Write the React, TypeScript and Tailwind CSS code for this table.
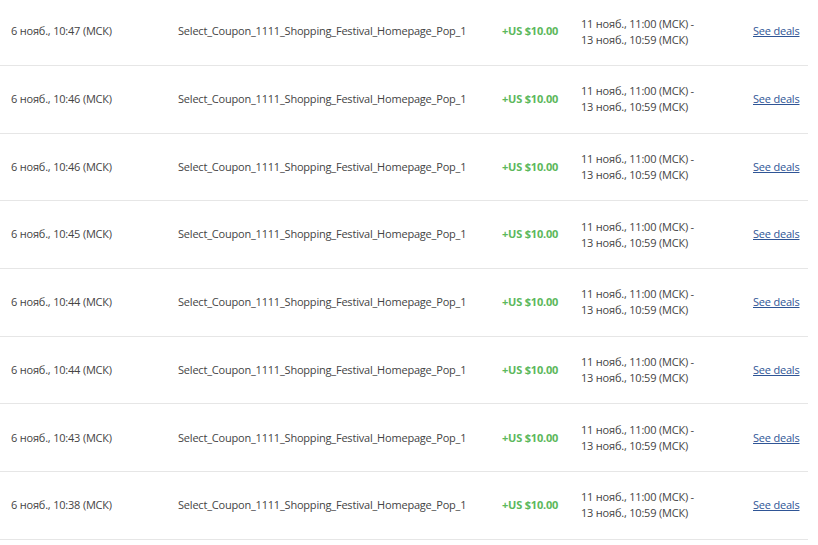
const rows = ['10:47', '10:46', '10:46', '10:45', '10:44', '10:44', '10:43', '10:38']

export default function App() {
  return (
    <div className="w-[818px] h-[545px] overflow-hidden bg-white font-['Open_Sans',sans-serif] text-[11px] tracking-[-0.2px] text-[#444]">
      <div className="-mt-[1.7px] w-[808px]">
        {rows.map((time, i) => (
          <div key={i} className="flex items-center h-[67.7px] border-b border-[#e6e6e6]">
            <div className="w-[178px] pl-[11px]">6 нояб., {time} (МСК)</div>
            <div className="w-[324px]">Select_Coupon_1111_Shopping_Festival_Homepage_Pop_1</div>
            <div className="w-[79px] font-bold text-[#5cb85c]">+US $10.00</div>
            <div className="w-[172px] leading-[16px]">
              <div>11 нояб., 11:00 (МСК) -</div>
              <div>13 нояб., 10:59 (МСК)</div>
            </div>
            <a href="#" className="text-[#2f5596] underline">See deals</a>
          </div>
        ))}
      </div>
    </div>
  )
}
